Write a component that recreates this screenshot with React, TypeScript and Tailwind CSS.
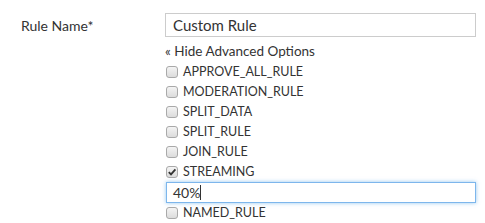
import React from 'react';

const RULES = ['APPROVE_ALL_RULE', 'MODERATION_RULE', 'SPLIT_DATA', 'SPLIT_RULE', 'JOIN_RULE', 'STREAMING'];

const Check: React.FC<{ checked?: boolean }> = ({ checked }) => (
  <span className="w-[12px] h-[12px] rounded-[3px] border border-[#a9a9a9] bg-gradient-to-b from-[#f4f4f4] to-[#dcdcdc] flex items-center justify-center shrink-0">
    {checked && (
      <svg width="10" height="10" viewBox="0 0 10 10">
        <path d="M1.8 5.2 L4 7.4 L8.4 2.4" fill="none" stroke="#333" strokeWidth="1.8" />
      </svg>
    )}
  </span>
);

export default function App() {
  return (
    <div className="w-[485px] h-[223px] bg-white text-[#333] text-[12.5px] font-['Lato','Open_Sans',sans-serif] flex">
      <div className="w-[165px] pl-[21px] pt-[15px] text-[14px]">Rule Name*</div>
      <div className="pt-[13px] w-[311px] flex flex-col">
        <input
          readOnly
          value="Custom Rule"
          className="h-[26px] w-full border border-[#ccc] px-[7px] text-[15px] text-[#333] outline-none"
        />
        <div className="mt-[4px] h-[20px] leading-[20px] text-[13.5px]">« Hide Advanced Options</div>
        <div className="flex flex-col mt-[1px]">
          {RULES.map(r => (
            <label key={r} className="h-[20px] flex items-center gap-[5px] pl-[1px]">
              <Check checked={r === 'STREAMING'} />
              <span>{r}</span>
            </label>
          ))}
          <div className="h-[21px] ml-[1px] border border-[#7db6ec] shadow-[0_0_4px_rgba(102,175,233,0.7)] px-[6px] flex items-center text-[14px]">
            40%<span className="w-px h-[15px] bg-[#333]" />
          </div>
          <label className="h-[20px] flex items-center gap-[5px] pl-[1px]">
            <Check />
            <span>NAMED_RULE</span>
          </label>
        </div>
      </div>
    </div>
  );
}
